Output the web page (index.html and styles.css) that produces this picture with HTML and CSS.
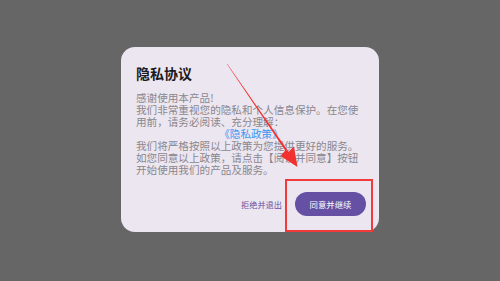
FILE: index.html
```html
<!DOCTYPE html>
<html lang="zh">
<head>
<meta charset="utf-8">
<link rel="stylesheet" href="styles.css">
</head>
<body>
<div class="stage">
  <div class="dialog">
    <h1 class="title">隐私协议</h1>
    <div class="content">
      <p>感谢使用本产品!<br>我们非常重视您的隐私和个人信息保护。在您使<br>用前，请务必阅读、充分理解：</p>
      <p class="link">《隐私政策》</p>
      <p>我们将严格按照以上政策为您提供更好的服务。<br>如您同意以上政策，请点击【阅读并同意】按钮<br>开始使用我们的产品及服务。</p>
    </div>
    <div class="actions">
      <span class="text-btn">拒绝并退出</span>
      <span class="filled-btn">同意并继续</span>
    </div>
  </div>
  <div class="highlight"></div>
  <svg class="arrow" width="500" height="281" viewBox="0 0 500 281">
    <polygon points="226.7,63.8 227.5,64.3 288.6,151.8 294,146.5 297.5,167 280.5,156 285.2,150.6" fill="#f2302f"/>
  </svg>
</div>
</body>
</html>
```
FILE: styles.css
```css
* { box-sizing: border-box; }
html, body { margin: 0; padding: 0; }
body {
  background: #666666;
  font-family: "Noto Sans CJK SC", "Noto Sans", sans-serif;
}
.stage {
  position: relative;
  width: 500px;
  height: 281px;
  display: flex;
  align-items: flex-start;
  justify-content: center;
  padding-top: 47px;
}
.dialog {
  width: 258px;
  height: 185px;
  background: #ece6f0;
  border-radius: 14px;
  padding: 16px 13px 16px 15px;
  display: flex;
  flex-direction: column;
}
.title {
  margin: 0;
  font-size: 14px;
  line-height: 20px;
  font-weight: 700;
  color: #1d1b20;
}
.content {
  margin-top: 9px;
  font-size: 10.6px;
  line-height: 12px;
  color: #8a868e;
  white-space: nowrap;
}
.content p { margin: 0; }
.content .link {
  text-align: center;
  color: #3c98f0;
}
.actions {
  margin-top: auto;
  display: flex;
  align-items: center;
  justify-content: flex-end;
  gap: 13px;
}
.text-btn {
  font-size: 8.2px;
  color: #6650a4;
}
.filled-btn {
  height: 24px;
  width: 71px;
  border-radius: 12px;
  background: #6650a4;
  color: #ffffff;
  font-size: 8.4px;
  display: flex;
  align-items: center;
  justify-content: center;
}
.highlight {
  position: absolute;
  left: 285px;
  top: 179px;
  width: 88px;
  height: 53px;
  border: 2px solid #f23a3a;
}
.arrow {
  position: absolute;
  left: 0;
  top: 0;
}
```
